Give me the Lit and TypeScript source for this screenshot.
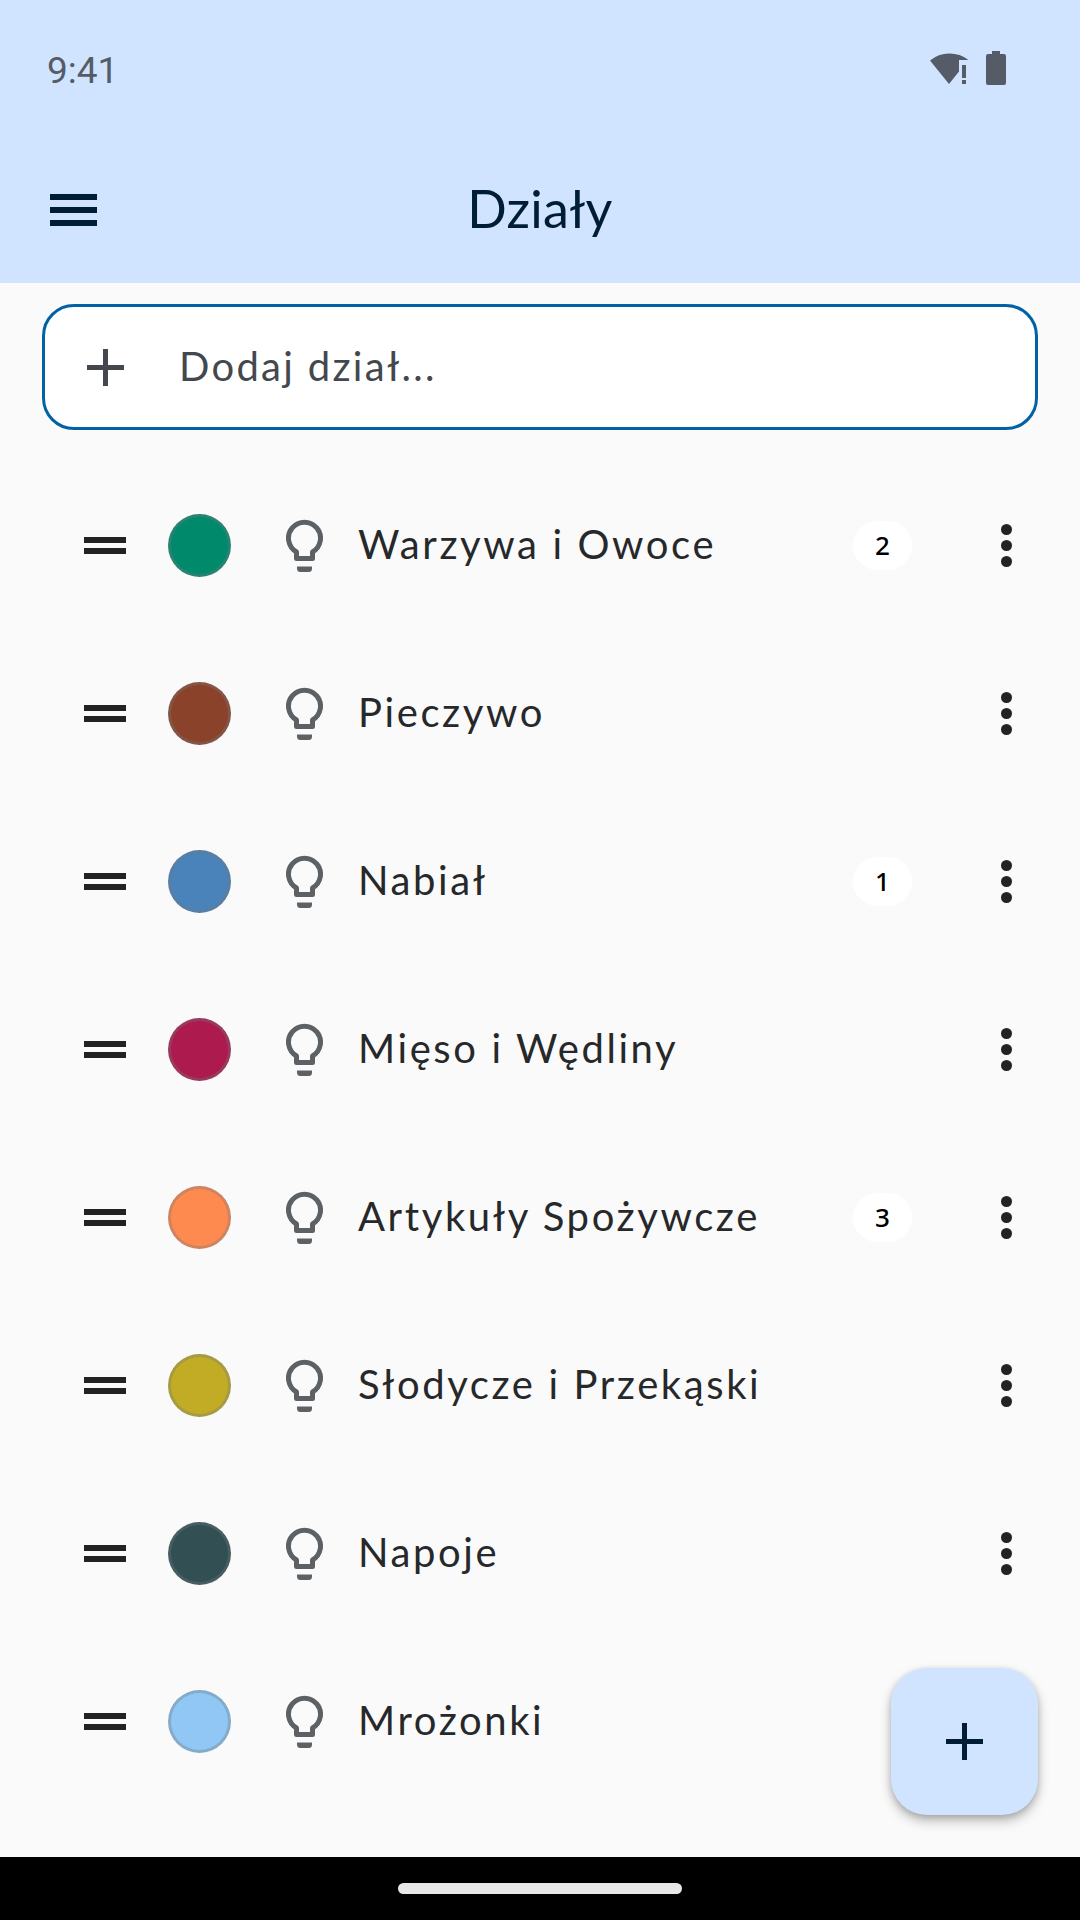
import {LitElement, css, html, svg} from 'lit';
import {customElement} from 'lit/decorators.js';

const departments = [
  {name: 'Warzywa i Owoce', color: '#00896b', count: 2},
  {name: 'Pieczywo', color: '#8b422a', count: 0},
  {name: 'Nabiał', color: '#4a82ba', count: 1},
  {name: 'Mięso i Wędliny', color: '#ad1a4e', count: 0},
  {name: 'Artykuły Spożywcze', color: '#ff8a50', count: 3},
  {name: 'Słodycze i Przekąski', color: '#c2ac25', count: 0},
  {name: 'Napoje', color: '#324f54', count: 0},
  {name: 'Mrożonki', color: '#90c7f5', count: 0},
];

const bulb = svg`
  <path d="M10.5 39.5V33A16 16 0 1 1 26.5 33V39.5Z" fill="none" stroke="currentColor" stroke-width="5" stroke-linejoin="round"/>
  <path d="M11 47.500H26V49.500A3.500 3.500 0 0 1 22.500 53H14.500A3.500 3.500 0 0 1 11 49.500Z" fill="currentColor"/>
`;

@customElement('app-root')
export class AppRoot extends LitElement {
  static styles = css`
    :host {
      display: block;
      width: 1080px;
      height: 1920px;
      font-family: 'Lato', 'Noto Sans', sans-serif;
      background: #fafafa;
    }

    .screen {
      position: relative;
      display: flex;
      flex-direction: column;
      height: 100%;
      overflow: hidden;
    }

    .header {
      flex: none;
      height: 283px;
      background: #d1e4ff;
      color: #001d36;
    }

    .status {
      display: flex;
      align-items: center;
      justify-content: space-between;
      height: 138px;
      padding: 0 74px 0 47px;
      color: #555c68;
    }

    .time {
      margin-top: 3px;
      font-family: 'Roboto', sans-serif;
      font-size: 37px;
    }

    .status-icons {
      display: flex;
      align-items: flex-start;
      gap: 17px;
      margin-bottom: 2px;
    }

    .status-icons svg {
      display: block;
      fill: currentColor;
    }

    .appbar {
      position: relative;
      display: flex;
      align-items: center;
      justify-content: center;
      box-sizing: border-box;
      height: 145px;
      padding-bottom: 5px;
    }

    .menu {
      position: absolute;
      left: 50px;
      top: 56px;
      display: flex;
      flex-direction: column;
      gap: 7.500px;
    }

    .menu span {
      display: block;
      width: 47px;
      height: 5.500px;
      background: #001d36;
    }

    .title {
      font-size: 52px;
      letter-spacing: 0.300px;
      line-height: 60px;
    }

    .add-box {
      flex: none;
      display: flex;
      align-items: center;
      gap: 55px;
      box-sizing: border-box;
      height: 126px;
      margin: 21px 42px 31px;
      padding: 0 0 0 42px;
      background: #fff;
      border: 3px solid #0061a4;
      border-radius: 32px;
      color: #43484f;
    }

    .add-box svg {
      flex: none;
      width: 37px;
      height: 37px;
    }

    .add-label {
      padding-bottom: 2px;
      font-size: 40px;
      letter-spacing: 2.300px;
    }

    .list {
      flex: 1;
    }

    .row {
      display: flex;
      align-items: center;
      height: 168px;
      color: #26282a;
    }

    .handle {
      flex: none;
      display: flex;
      flex-direction: column;
      gap: 5px;
      margin: 1px 0 0 84px;
    }

    .handle span {
      display: block;
      width: 42px;
      height: 6px;
      background: #222;
    }

    .swatch {
      flex: none;
      box-sizing: border-box;
      width: 63px;
      height: 63px;
      margin-left: 42px;
      border: 3px solid rgba(116, 119, 122, 0.35);
      border-radius: 50%;
    }

    .bulb {
      flex: none;
      width: 37px;
      height: 53px;
      margin-left: 55px;
      color: #5c6166;
    }

    .name {
      flex: 1;
      margin-left: 35px;
      padding-bottom: 2px;
      font-size: 40px;
      letter-spacing: 2.600px;
    }

    .badge {
      flex: none;
      width: 59px;
      height: 49px;
      border-radius: 25px;
      background: #fff;
      color: #000;
      font-family: 'Noto Sans', sans-serif;
      font-size: 26px;
      font-weight: 500;
      line-height: 49px;
      text-align: center;
    }

    .more {
      flex: none;
      width: 11px;
      margin: 0 68px 0 89px;
      display: flex;
      flex-direction: column;
      gap: 5px;
    }

    .more span {
      display: block;
      width: 11px;
      height: 11px;
      border-radius: 50%;
      background: #222;
    }

    .fab {
      position: absolute;
      left: 891px;
      top: 1668px;
      display: flex;
      align-items: center;
      justify-content: center;
      width: 147px;
      height: 147px;
      border-radius: 36px;
      background: #d1e4ff;
      color: #001d36;
      box-shadow: 0 6px 12px rgba(0, 0, 0, 0.25), 0 2px 6px rgba(0, 0, 0, 0.15);
    }

    .fab svg {
      width: 37px;
      height: 37px;
    }

    .navbar {
      flex: none;
      display: flex;
      align-items: center;
      justify-content: center;
      height: 63px;
      background: #000;
    }

    .pill {
      width: 284px;
      height: 11px;
      border-radius: 6px;
      background: #e8e8e8;
    }
  `;

  renderPlus(weight: number) {
    const a = (37 - weight) / 2;
    return html`<svg viewBox="0 0 37 37">
      <path d="M0 ${a}H37V${a + weight}H0ZM${a} 0H${a + weight}V37H${a}Z" fill="currentColor"/>
    </svg>`;
  }

  renderRow(d: {name: string; color: string; count: number}) {
    return html`
      <div class="row">
        <div class="handle"><span></span><span></span></div>
        <div class="swatch" style="background:${d.color}"></div>
        <svg class="bulb" viewBox="0 0 37 53">${bulb}</svg>
        <div class="name">${d.name}</div>
        ${d.count ? html`<div class="badge">${d.count}</div>` : ''}
        <div class="more"><span></span><span></span><span></span></div>
      </div>
    `;
  }

  render() {
    return html`
      <div class="screen">
        <div class="header">
          <div class="status">
            <div class="time">9:41</div>
            <div class="status-icons">
              <svg width="39" height="34" viewBox="0 0 39 34">
                <path d="M0 9.500A31 31 0 0 1 38.500 9H29V20.500L19 33Z"/>
                <path d="M32 14h4v13h-4ZM32 29h4v4h-4Z"/>
              </svg>
              <svg width="20" height="34" viewBox="0 0 20 34">
                <path d="M6 0h8v3h4a2 2 0 0 1 2 2v27a2 2 0 0 1-2 2H2a2 2 0 0 1-2-2V5a2 2 0 0 1 2-2h4Z"/>
              </svg>
            </div>
          </div>
          <div class="appbar">
            <div class="menu"><span></span><span></span><span></span></div>
            <div class="title">Działy</div>
          </div>
        </div>
        <div class="add-box">
          ${this.renderPlus(5)}
          <div class="add-label">Dodaj dział...</div>
        </div>
        <div class="list">${departments.map((d) => this.renderRow(d))}</div>
        <div class="fab">${this.renderPlus(5)}</div>
        <div class="navbar"><div class="pill"></div></div>
      </div>
    `;
  }
}
